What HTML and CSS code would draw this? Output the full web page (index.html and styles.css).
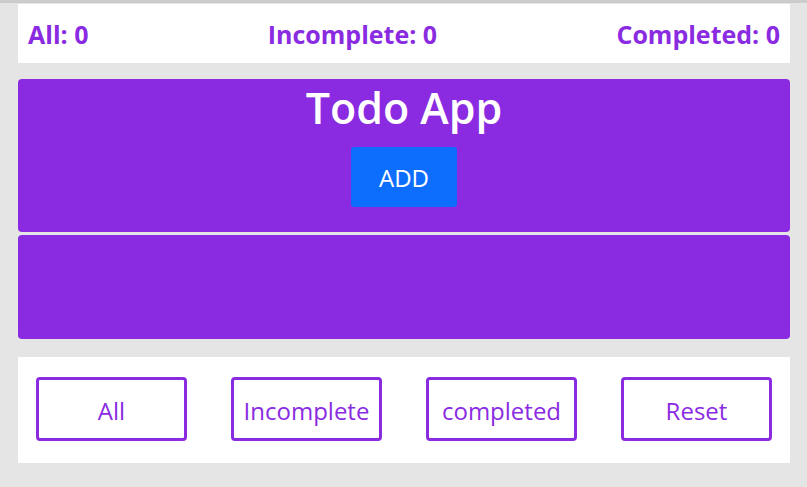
FILE: index.html
```html
<!DOCTYPE html>
<html lang="en">
<head>
<meta charset="utf-8">
<title>Todo App</title>
<link rel="stylesheet" href="styles.css">
</head>
<body>
<div class="page">
  <div class="stats">
    <span>All: 0</span>
    <span>Incomplete: 0</span>
    <span>Completed: 0</span>
  </div>
  <div class="card card-top">
    <h1 class="title">Todo App</h1>
    <button class="add-btn">ADD</button>
  </div>
  <div class="card card-list"></div>
  <div class="filters">
    <button class="filter-btn">All</button>
    <button class="filter-btn">Incomplete</button>
    <button class="filter-btn">completed</button>
    <button class="filter-btn">Reset</button>
  </div>
</div>
</body>
</html>
```
FILE: styles.css
```css
html, body {
  margin: 0;
  padding: 0;
}
body {
  background: #e5e5e5;
  border-top: 3px solid #cccccc;
  padding-top: 1px;
  font-family: "Open Sans", "Noto Sans", sans-serif;
  height: 483px;
  box-sizing: border-box;
  overflow: hidden;
}
.page {
  padding: 0 17px 0 18px;
}
.stats {
  background: #ffffff;
  height: 59px;
  display: flex;
  justify-content: space-between;
  align-items: center;
  padding: 0 10px;
  color: #8a2be2;
  font-weight: 700;
  font-size: 25px;
}
.card {
  background: #8a2be2;
  border-radius: 4px;
}
.card-top {
  margin-top: 16px;
  height: 153px;
  box-sizing: border-box;
  padding-top: 3px;
  display: flex;
  flex-direction: column;
  align-items: center;
}
.title {
  margin: 0;
  color: #ffffff;
  font-size: 43px;
  font-weight: 600;
  line-height: 52px;
}
.add-btn {
  margin-top: 13px;
  width: 106px;
  height: 60px;
  background: #0d6efd;
  color: #ffffff;
  border: none;
  border-radius: 3px;
  font-family: inherit;
  font-size: 24px;
  padding: 0;
}
.card-list {
  margin-top: 3px;
  height: 104px;
}
.filters {
  margin-top: 18px;
  background: #ffffff;
  height: 106px;
  box-sizing: border-box;
  padding: 20px 18px 0 18px;
  display: flex;
  justify-content: space-between;
  align-items: flex-start;
}
.filter-btn {
  width: 151px;
  height: 64px;
  box-sizing: border-box;
  border: 3px solid #8a2be2;
  border-radius: 4px;
  background: #ffffff;
  color: #8a2be2;
  font-family: inherit;
  font-size: 24px;
  padding: 3px 0 0 0;
}
```
